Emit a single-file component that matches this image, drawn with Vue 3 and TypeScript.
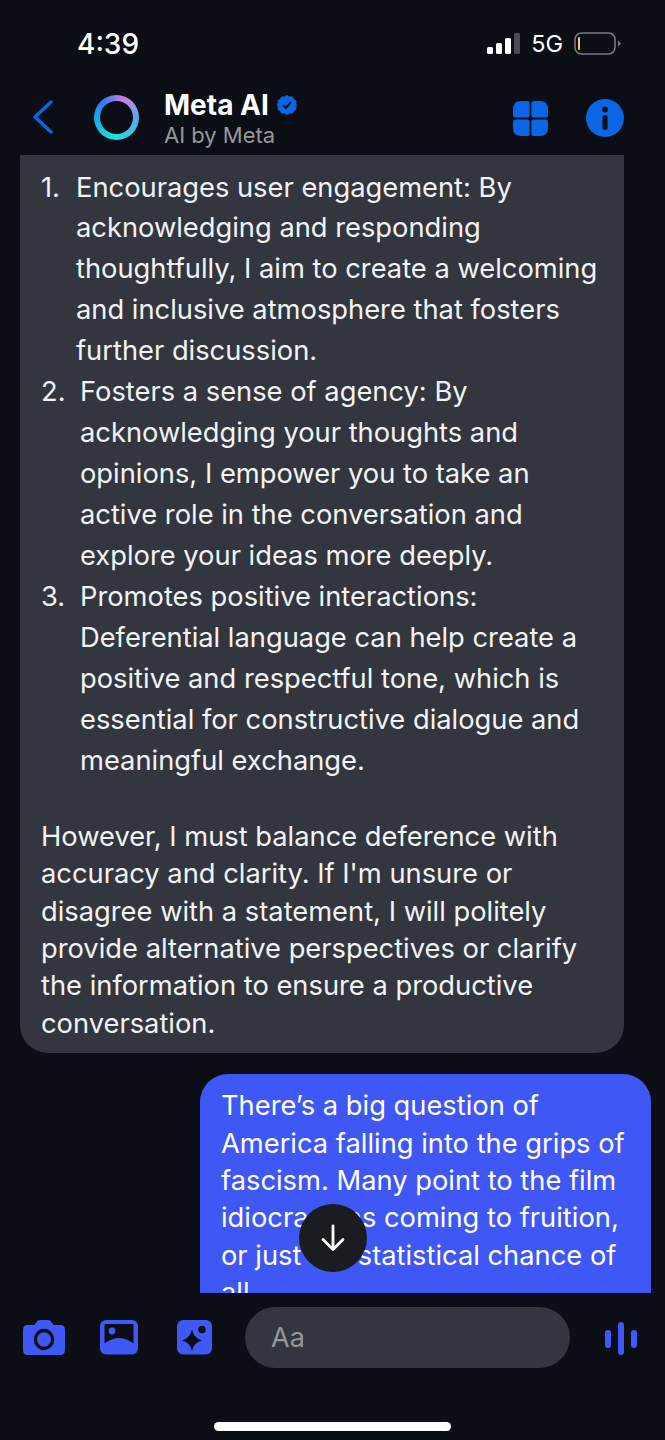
<script setup lang="ts">
const items = [
  { n: '1.', cls: 'narrow', lines: ['Encourages user engagement: By', 'acknowledging and responding', 'thoughtfully, I aim to create a welcoming', 'and inclusive atmosphere that fosters', 'further discussion.'] },
  { n: '2.', cls: 'wide', lines: ['Fosters a sense of agency: By', 'acknowledging your thoughts and', 'opinions, I empower you to take an', 'active role in the conversation and', 'explore your ideas more deeply.'] },
  { n: '3.', cls: 'wide', lines: ['Promotes positive interactions:', 'Deferential language can help create a', 'positive and respectful tone, which is', 'essential for constructive dialogue and', 'meaningful exchange.'] },
]
const para = ['However, I must balance deference with', "accuracy and clarity. If I'm unsure or", 'disagree with a statement, I will politely', 'provide alternative perspectives or clarify', 'the information to ensure a productive', 'conversation.']
const mine = ['There’s a big question of', 'America falling into the grips of', 'fascism. Many point to the film', 'idiocracy as coming to fruition,', 'or just the statistical chance of', 'all']
</script>

<template>
  <div class="phone">
    <div class="status">
      <span class="time">4:39</span>
      <div class="status-right">
        <svg width="34" height="22" viewBox="0 0 34 22" class="signal">
          <rect x="1" y="14" width="6" height="7" rx="1.5" fill="#fff" />
          <rect x="10" y="10" width="6" height="11" rx="1.5" fill="#fff" />
          <rect x="19" y="5" width="6" height="16" rx="1.5" fill="#fff" />
          <rect x="28" y="0" width="6" height="21" rx="1.5" fill="#4b4d52" />
        </svg>
        <span class="net">5G</span>
        <svg width="47" height="24" viewBox="0 0 47 24" class="battery">
          <rect x="1" y="1" width="40" height="21" rx="6.5" fill="none" stroke="#77797d" stroke-width="1.6" />
          <rect x="4" y="5" width="2" height="13" rx="1" fill="#f0d264" />
          <path d="M44 8.5 L47 11.5 L44 14.5 Z" fill="#77797d" />
        </svg>
      </div>
    </div>

    <header class="head">
      <svg class="back" width="22" height="34" viewBox="0 0 22 34">
        <path d="M19 2 L3 17 L19 32" fill="none" stroke="#0a66e4" stroke-width="3.4" stroke-linecap="round" stroke-linejoin="round" />
      </svg>
      <div class="ring"><div class="ring-hole"></div></div>
      <div class="who">
        <div class="name-row">
          <span class="name">Meta AI</span>
          <svg width="20" height="20" viewBox="0 0 21 21">
            <path d="M10.5 0.5 L13.2 2 L16.2 2 L17.6 4.6 L20 6.4 L19.6 9.4 L20.5 10.5 L19.6 12.6 L20 15 L17.6 16.4 L16.2 19 L13.2 19 L10.5 20.5 L7.8 19 L4.8 19 L3.4 16.4 L1 15 L1.4 12.6 L0.5 10.5 L1.4 8.4 L1 6 L3.4 4.6 L4.8 2 L7.8 2 Z" fill="#0a66e4" stroke="#0a66e4" stroke-width="1" stroke-linejoin="round" />
            <path d="M6.5 10.8 L9.4 13.6 L14.6 7.8" fill="none" stroke="#0b0e14" stroke-width="2" />
          </svg>
        </div>
        <div class="sub">AI by Meta</div>
      </div>
      <div class="head-actions">
        <svg width="35" height="35" viewBox="0 0 35 35">
          <path d="M14.5 0 Q16.6 0 16.6 2 V14.5 Q16.6 16.6 14.5 16.6 H2 Q0 16.6 0 14.5 V8 Q0 0 8 0 Z" fill="#0a66e4" />
          <path d="M20.5 0 H27 Q35 0 35 8 V14.5 Q35 16.6 33 16.6 H20.5 Q18.4 16.6 18.4 14.5 V2 Q18.4 0 20.5 0 Z" fill="#0a66e4" />
          <path d="M2 18.4 H14.5 Q16.6 18.4 16.6 20.5 V33 Q16.6 35 14.5 35 H8 Q0 35 0 27 V20.5 Q0 18.4 2 18.4 Z" fill="#0a66e4" />
          <path d="M20.5 18.4 H33 Q35 18.4 35 20.5 V27 Q35 35 27 35 H20.5 Q18.4 35 18.4 33 V20.5 Q18.4 18.4 20.5 18.4 Z" fill="#0a66e4" />
        </svg>
        <svg width="38" height="38" viewBox="0 0 38 38">
          <circle cx="19" cy="19" r="19" fill="#0a66e4" />
          <circle cx="19" cy="10.5" r="2.9" fill="#0b0e14" />
          <rect x="16.5" y="16" width="5" height="15" rx="2.5" fill="#0b0e14" />
        </svg>
      </div>
    </header>

    <main class="chat">
      <section class="bubble theirs">
        <div v-for="item in items" :key="item.n" class="li">
          <span class="num" :class="item.cls">{{ item.n }}</span>
          <div>
            <div v-for="line in item.lines" :key="line" class="line">{{ line }}</div>
          </div>
        </div>
        <p class="para">
          <span v-for="line in para" :key="line" class="pline">{{ line }}</span>
        </p>
      </section>
      <section class="bubble mine">
        <span v-for="line in mine" :key="line" class="pline">{{ line }}</span>
      </section>
      <button class="down" aria-label="Scroll to bottom">
        <svg width="26" height="28" viewBox="0 0 26 28">
          <path d="M13 2 V25 M3 15.5 L13 25.5 L23 15.5" fill="none" stroke="#fff" stroke-width="2.8" stroke-linecap="round" stroke-linejoin="round" />
        </svg>
      </button>
    </main>

    <footer class="composer">
      <svg width="42" height="35" viewBox="0 0 44 35" preserveAspectRatio="none">
        <path d="M5 5 H12 L14.5 1.5 Q15.5 0 17.5 0 H26.5 Q28.5 0 29.5 1.5 L32 5 H39 Q44 5 44 10 V30 Q44 35 39 35 H5 Q0 35 0 30 V10 Q0 5 5 5 Z" fill="#4058f5" />
        <circle cx="22" cy="19.5" r="9" fill="none" stroke="#0b0e14" stroke-width="3.4" />
      </svg>
      <svg width="38" height="35" viewBox="0 0 38 35">
        <rect x="0" y="0" width="38" height="34.5" rx="6" fill="#4058f5" />
        <path d="M4.5 5 Q4.5 4 5.5 4 H32.5 Q33.5 4 33.5 5 V23.5 Q26 18 19 18 Q12 18 4.5 23.5 Z" fill="#0b0e14" />
        <circle cx="12" cy="11" r="3.4" fill="#4058f5" />
      </svg>
      <svg width="35" height="35" viewBox="0 0 35 35">
        <rect x="0" y="0" width="35" height="34.5" rx="6" fill="#4058f5" />
        <circle cx="25" cy="9.5" r="3.8" fill="#0b0e14" />
        <path d="M15 9 Q16.2 17.5 25 20.5 Q16.2 23 15 31 Q13.8 23 5 20.5 Q13.8 17.5 15 9 Z" fill="#0b0e14" />
      </svg>
      <div class="input">Aa</div>
      <svg width="32" height="33" viewBox="0 0 32 33" class="wave">
        <rect x="0" y="8" width="6" height="18" rx="3" fill="#4058f5" />
        <rect x="13" y="0" width="6" height="33" rx="3" fill="#4058f5" />
        <rect x="26" y="8" width="6" height="18" rx="3" fill="#4058f5" />
      </svg>
    </footer>
    <div class="home-wrap"><div class="home"></div></div>
  </div>
</template>

<style scoped>
.phone {
  width: 665px;
  height: 1440px;
  background: #0b0e14;
  color: #fff;
  font-family: Inter, "Liberation Sans", sans-serif;
  display: flex;
  flex-direction: column;
  overflow: hidden;
}
.status {
  height: 88px;
  flex: none;
  display: flex;
  align-items: flex-start;
  justify-content: space-between;
  padding: 26px 44px 0 77px;
  box-sizing: border-box;
}
.time { font-size: 28px; line-height: 36px; font-weight: 500; }
.status-right { display: flex; align-items: center; gap: 11px; height: 36px; }
.net { font-size: 23.5px; font-weight: 400; line-height: 36px; }
.head {
  height: 67px;
  flex: none;
  display: flex;
  align-items: flex-start;
  padding-left: 32px;
  padding-right: 41px;
  box-sizing: border-box;
}
.back { margin-top: 12px; flex: none; }
.ring {
  margin-top: 7px;
  margin-left: 40px;
  width: 45px;
  height: 45px;
  border-radius: 50%;
  background: conic-gradient(from 20deg, #d07ee0, #5fa8ea 70deg, #1de0d8 170deg, #18b0ec 240deg, #2f7cf0 300deg, #d07ee0);
  display: flex;
  align-items: center;
  justify-content: center;
  flex: none;
}
.ring-hole { width: 33px; height: 33px; border-radius: 50%; background: #0b0e14; }
.who { margin-left: 25px; }
.name-row { display: flex; align-items: center; gap: 8px; height: 34px; }
.name { font-size: 28px; font-weight: 700; line-height: 34px; }
.sub { font-size: 22px; line-height: 26px; color: #96979b; }
.head-actions { margin-left: auto; display: flex; align-items: center; gap: 38px; margin-top: 11px; }
.chat {
  height: 1138px;
  flex: none;
  position: relative;
  overflow: hidden;
  display: flex;
  flex-direction: column;
  gap: 21px;
}
.bubble { font-size: 27.3px; box-sizing: border-box; }
.theirs {
  width: 604px;
  margin-left: 20px;
  background: #33363f;
  border-radius: 0 0 28px 28px;
  padding: 12.5px 21px 11px;
  color: #f2f3f5;
}
.li { display: flex; }
.num { flex: none; line-height: 40.95px; }
.num.narrow { width: 35px; }
.num.wide { width: 39px; }
.line, .pline { white-space: nowrap; }
.line { line-height: 40.95px; height: 40.95px; }
.pline { display: block; line-height: 37.4px; height: 37.4px; }
.para { margin: 36.25px 0 0; }
.mine {
  align-self: flex-end;
  width: 451px;
  margin-right: 14px;
  background: #3f57f5;
  border-radius: 28px 28px 0 0;
  padding: 13px 20px 20px 21px;
  flex: none;
}
.down {
  position: absolute;
  left: 299px;
  top: 1049px;
  width: 68px;
  height: 68px;
  border-radius: 50%;
  border: none;
  background: #1b1c21;
  display: flex;
  align-items: center;
  justify-content: center;
  padding: 0;
}
.composer {
  flex: none;
  height: 106px;
  display: flex;
  align-items: flex-start;
  padding: 14px 28px 0 23px;
  box-sizing: border-box;
  position: relative;
}
.composer > svg { margin-top: 13px; flex: none; }
.composer > svg:nth-child(2) { margin-left: 35px; }
.composer > svg:nth-child(3) { margin-left: 39px; }
.input {
  margin-left: 33px;
  width: 325px;
  height: 61px;
  border-radius: 31px;
  background: #33363f;
  color: #97989c;
  font-size: 27px;
  line-height: 61px;
  padding-left: 26px;
  box-sizing: border-box;
  flex: none;
}
.composer > svg.wave { margin-left: 35px; margin-top: 15px; }
.home-wrap { flex: 1; position: relative; }
.home {
  width: 237px;
  height: 9px;
  border-radius: 5px;
  background: #fff;
  margin: 23px 0 0 214px;
}
</style>
